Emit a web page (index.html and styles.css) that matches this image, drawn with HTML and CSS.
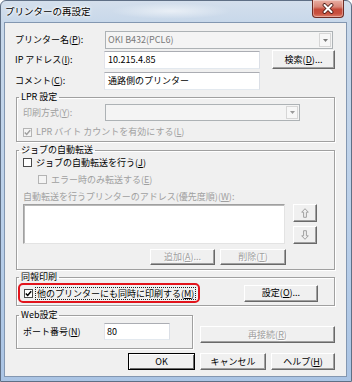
FILE: index.html
```html
<!DOCTYPE html>
<html lang="ja">
<head>
<meta charset="utf-8">
<title>プリンターの再設定</title>
<link rel="stylesheet" href="styles.css">
</head>
<body>
<div class="window">
  <div class="titlebar">
    <span class="title">プリンターの再設定</span>
    <span class="close">
      <svg width="14" height="11" viewBox="0 0 14 11"><path d="M3.5 2 L10.5 9 M10.5 2 L3.5 9" stroke="#4a1a14" stroke-width="3.8" stroke-linecap="round"/><path d="M3.5 2 L10.5 9 M10.5 2 L3.5 9" stroke="#fff" stroke-width="2.1" stroke-linecap="round"/></svg>
    </span>
  </div>
  <div class="client">
    <div class="row r1">
      <span class="lbl w90">プリンター名(<u>P</u>):</span>
      <div class="combo c-printer"><span class="ctext">OKI B432(PCL6)</span><span class="drop"><svg width="5" height="3" viewBox="0 0 5 3"><path d="M0 0 H5 L2.5 3 Z" fill="#7a7a7a"/></svg></span></div>
    </div>
    <div class="row r2">
      <span class="lbl w89">IP アドレス(<u>I</u>):</span>
      <div class="tb tb-wide">10.215.4.85</div>
      <button class="btn b-search">検索(<u>D</u>)...</button>
    </div>
    <div class="row r3">
      <span class="lbl w89">コメント(<u>C</u>):</span>
      <div class="tb tb-wide tb-c">通路側のプリンター</div>
    </div>

    <fieldset class="group g-lpr">
      <legend>LPR 設定</legend>
      <div class="row lpr-r1">
        <span class="lbl w82 dis">印刷方式(<u>Y</u>):</span>
        <div class="combo c-method"><span class="ctext"></span><span class="drop"><svg width="5" height="3" viewBox="0 0 5 3"><path d="M0 0 H5 L2.5 3 Z" fill="#9a9a9a"/></svg></span></div>
      </div>
      <div class="chk lpr-r2 dis">
        <span class="cb cb-dis"><svg width="7" height="7" viewBox="0 0 7 7"><path d="M0.8 3.4 L2.7 5.4 L6.2 1.2" fill="none" stroke="#a0a0a0" stroke-width="1.5"/></svg></span>LPR バイト カウントを有効にする(<u>L</u>)
      </div>
    </fieldset>

    <fieldset class="group g-job">
      <legend>ジョブの自動転送</legend>
      <div class="chk job-r1">
        <span class="cb"></span>ジョブの自動転送を行う(<u>J</u>)
      </div>
      <div class="chk job-r2 dis">
        <span class="cb cb-dis"></span>エラー時のみ転送する(<u>E</u>)
      </div>
      <div class="job-r3 dis">自動転送を行うプリンターのアドレス(優先度順)(<u>W</u>):</div>
      <div class="listrow">
        <div class="list"></div>
        <div class="arrows">
          <button class="btn b-arrow"><svg width="8" height="10" viewBox="0 0 8 10"><path d="M4 0.7 L7.3 4.2 H5.4 V9.3 H2.6 V4.2 H0.7 Z" fill="none" stroke="#a0a0a0" stroke-width="1"/></svg></button>
          <button class="btn b-arrow"><svg width="8" height="10" viewBox="0 0 8 10"><path d="M4 9.3 L7.3 5.8 H5.4 V0.7 H2.6 V5.8 H0.7 Z" fill="none" stroke="#a0a0a0" stroke-width="1"/></svg></button>
        </div>
      </div>
      <div class="addrow">
        <button class="btn dis b-add">追加(<u>A</u>)...</button>
        <button class="btn dis b-del">削除(<u>T</u>)</button>
      </div>
    </fieldset>

    <fieldset class="group g-multi">
      <legend>同報印刷</legend>
      <div class="row multi-r">
        <div class="highlight">
          <span class="cb"><svg width="7" height="7" viewBox="0 0 7 7"><path d="M0.8 3.4 L2.7 5.4 L6.2 1.2" fill="none" stroke="#000" stroke-width="1.5"/></svg></span><span class="focus">他のプリンターにも同時に印刷する(<u>M</u>)</span>
        </div>
        <button class="btn b-set">設定(<u>O</u>)...</button>
      </div>
    </fieldset>

    <div class="webrow">
      <fieldset class="group g-web">
        <legend>Web設定</legend>
        <div class="row web-r">
          <span class="lbl w81">ポート番号(<u>N</u>)</span>
          <div class="tb tb-port">80</div>
        </div>
      </fieldset>
      <button class="btn dis b-reconnect">再接続(<u>R</u>)</button>
    </div>

    <div class="footer">
      <button class="btn b-ok">OK</button>
      <button class="btn b-cancel">キャンセル</button>
      <button class="btn b-help">ヘルプ(<u>H</u>)</button>
    </div>
  </div>
</div>
</body>
</html>
```

FILE: styles.css
```css
* { box-sizing: border-box; }
html, body { margin: 0; padding: 0; }
body {
  width: 352px;
  height: 382px;
  overflow: hidden;
  background: #fff;
  font-family: "Noto Sans CJK JP", sans-serif;
  font-size: 9px;
  line-height: 12px;
  color: #000;
}
u { text-decoration: underline; text-underline-offset: 1px; }

.window {
  width: 352px;
  height: 382px;
  border: 1px solid #5f6f85;
  border-radius: 6px 6px 0 0;
  padding: 0 4px 4px 3px;
  background:
    radial-gradient(ellipse 60px 8px at 170px 10px, rgba(255,255,255,0.55), rgba(255,255,255,0)),
    linear-gradient(180deg, #d4dfec 0, #c8d8ea 21px, #b9cfe9 60%, #aac4e4 100%);
  display: flex;
  flex-direction: column;
}

.titlebar {
  height: 21px;
  display: flex;
  align-items: flex-start;
  flex: none;
}
.title {
  padding-left: 1px;
  margin-top: 4px;
  line-height: 13px;
  font-size: 9.5px;
  color: #000;
  text-shadow: 0 0 5px #fff, 0 0 3px #fff, 0 0 2px #fff;
}
.close {
  margin-left: auto;
  margin-right: 3px;
  margin-top: -1px;
  width: 32px;
  height: 18px;
  border: 1px solid #6e2c24;
  border-top: none;
  border-radius: 0 0 4px 4px;
  background: linear-gradient(180deg, #eab0a4 0%, #d88677 40%, #c54a39 55%, #c9513f 80%, #dc7f6a 100%);
  box-shadow: inset 0 0 0 1px rgba(255,255,255,0.35);
  display: flex;
  align-items: center;
  justify-content: center;
}

.client {
  flex: 1;
  background: #f0f0f0;
  border: 1px solid #8397b1;
  padding: 8px 0 0 10px;
  display: flex;
  flex-direction: column;
}

.row { display: flex; align-items: center; }
.lbl { flex: none; white-space: nowrap; }
.w90 { width: 90px; }
.w89 { width: 89px; }
.w82 { width: 82px; }
.w81 { width: 81px; }
.dis { color: #a0a0a0; }

.r1 { height: 18px; }
.r2 { height: 19px; margin-top: 1px; }
.r3 { height: 18px; margin-top: 3px; }

.combo {
  height: 18px;
  border: 1px solid #adb2b5;
  background: #f4f4f4;
  color: #7a7a7a;
  display: flex;
  align-items: center;
  padding-left: 2px;
}
.c-printer { width: 228px; }
.c-method { width: 195px; height: 17px; }
.ctext { flex: 1; white-space: nowrap; }
.drop {
  width: 12px;
  height: 14px;
  margin-right: 1px;
  border: 1px solid #d6d6d6;
  background: #f7f7f7;
  display: flex;
  align-items: center;
  justify-content: center;
}
.c-method .drop { height: 13px; }

.tb {
  height: 18px;
  background: #fff;
  border: 1px solid;
  border-color: #abadb3 #dbdfe6 #e3e9ef #e2e3ea;
  padding-left: 3px;
  display: flex;
  align-items: center;
  white-space: nowrap;
}
.tb-wide { width: 156px; }
.r2 .tb { align-self: flex-end; }
.tb-port { width: 66px; height: 17px; padding-left: 2px; }

.btn {
  font: inherit;
  color: #000;
  background: #f0f0f0;
  border: 1px solid;
  border-color: #fff #696969 #696969 #fff;
  box-shadow: inset -1px -1px 0 #a0a0a0;
  padding: 0;
  margin: 0;
  display: flex;
  align-items: center;
  justify-content: center;
  white-space: nowrap;
  flex: none;
}
.btn.dis { color: #a0a0a0; text-shadow: 1px 1px 0 #fff; }
.b-search { width: 63px; height: 19px; margin-left: 12px; }

.group {
  margin: 0 0 0 1px;
  width: 319px;
  padding: 0 0 0 6px;
  border: 1px solid #a0a0a0;
  box-shadow: inset 1px 1px 0 #fff, 1px 1px 0 #fff;
  min-width: 0;
}
.group legend {
  padding: 0 2px;
  margin-left: -4px;
  height: 12px;
  line-height: 12px;
  color: #000;
}

.g-lpr { margin-top: 1px; padding-bottom: 2px; }
.lpr-r1 { margin-top: 1px; height: 17px; }
.chk { display: flex; align-items: center; height: 13px; white-space: nowrap; }
.lpr-r2 { margin-top: 4px; height: 14px; }

.cb {
  width: 9px;
  height: 9px;
  border: 1px solid #4a4a4a;
  background: #fff;
  margin-right: 4px;
  flex: none;
  display: flex;
  align-items: center;
  justify-content: center;
}
.cb-dis { border-color: #b4b4b4; background: #f4f4f4; }

.g-job { margin-top: 2px; padding-bottom: 4px; }
.job-r2 { margin-top: 4px; padding-left: 15px; }
.job-r3 { margin-top: 5px; height: 12px; white-space: nowrap; }
.listrow { display: flex; margin-top: 1px; height: 40px; }
.list {
  width: 262px;
  height: 40px;
  background: #fff;
  border: 1px solid;
  border-color: #a0a0a0 #e3e3e3 #e3e3e3 #a0a0a0;
  box-shadow: inset 1px 1px 0 #b9b9b9;
}
.arrows { margin-left: 8px; display: flex; flex-direction: column; gap: 4px; }
.b-arrow { width: 24px; height: 18px; }
.addrow { display: flex; margin-top: 5px; padding-left: 127px; gap: 5px; }
.b-add { width: 65px; height: 16px; }
.b-del { width: 66px; height: 16px; }

.g-multi { margin-top: 1px; padding-bottom: 2px; padding-left: 0; }
.g-multi legend { margin-left: 2px; }
.multi-r { height: 20px; }
.highlight {
  margin-left: 1px;
  width: 182px;
  height: 20px;
  border: 2px solid #e2141c;
  border-radius: 5px;
  padding-left: 4px;
  display: flex;
  align-items: center;
  white-space: nowrap;
}
.highlight .cb { margin-right: 2px; }
.focus {
  border: 1px dotted #222;
  padding: 0 1px;
  line-height: 11px;
}
.b-set { width: 74px; height: 17px; margin-left: 44px; }

.webrow { display: flex; align-items: flex-start; margin-top: 3px; }
.g-web { width: 177px; padding-bottom: 8px; }
.web-r { margin-top: 2px; height: 17px; }
.b-reconnect { width: 135px; height: 17px; margin-left: 7px; margin-top: 17px; }

.footer { display: flex; margin-top: 4px; padding-left: 113px; gap: 5px; }
.footer .btn { height: 17px; }
.b-ok { width: 67px; border-color: #000; box-shadow: inset 1px 1px 0 #fff, inset -1px -1px 0 #696969; }
.b-cancel { width: 66px; }
.b-help { width: 64px; }
```
